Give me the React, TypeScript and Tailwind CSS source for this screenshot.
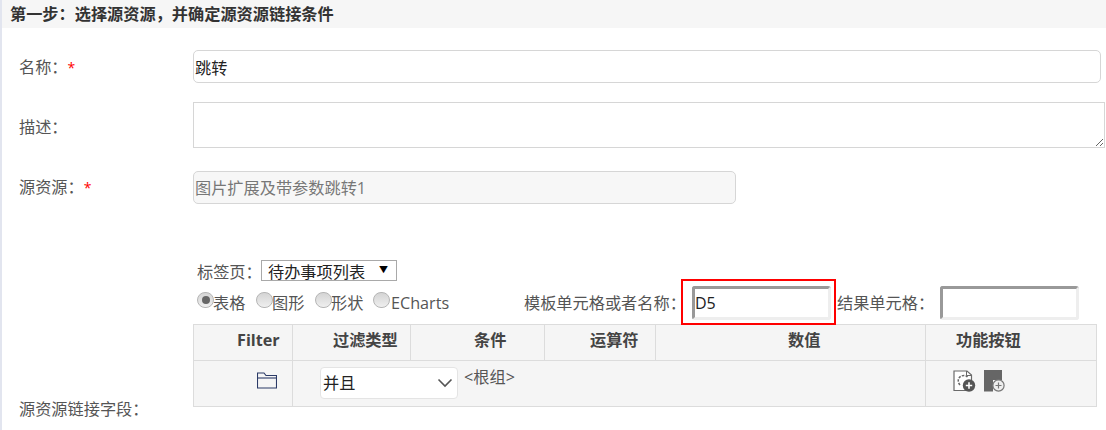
const font = "font-['Open_Sans','Noto_Sans_CJK_SC',sans-serif]";

const headers = [
  { label: "Filter", className: "w-[99px] pl-[43px]" },
  { label: "过滤类型", className: "w-[118px] pl-[40px]" },
  { label: "条件", className: "w-[134px] pl-[63px]" },
  { label: "运算符", className: "w-[111px] pl-[45px]" },
  { label: "数值", className: "w-[270px] pl-[132px]" },
  { label: "功能按钮", className: "w-[170px] pl-[30px]" },
];

function FolderIcon() {
  return (
    <svg width="20" height="17" viewBox="0 0 20 17" fill="none" stroke="#2b3a67" strokeWidth="1.1">
      <path d="M0.5 16V1H7L9 3.5H19.5V16Z" />
      <path d="M0.5 6H19.5" />
    </svg>
  );
}

function AddLinkIcon() {
  return (
    <svg width="23" height="22" viewBox="0 0 23 22" fill="none">
      <path d="M1 1H14L18.5 5V20.5H1Z" fill="#fff" stroke="#6a6a6a" strokeWidth="1.2" />
      <path d="M13.5 1V5.5H18.5" stroke="#6a6a6a" />
      <path d="M7 15C3.5 11 5.5 5.5 11 5.5C12.5 5.5 13.5 6 14.5 7" stroke="#666" strokeWidth="1.5" strokeDasharray="2.4 1.3" />
      <circle cx="16" cy="15.5" r="6.2" fill="#555" />
      <path d="M12.8 15.5H19.2M16 12.3V18.7" stroke="#fff" strokeWidth="1.6" />
    </svg>
  );
}

function AddSheetIcon() {
  return (
    <svg width="22" height="22" viewBox="0 0 22 22" fill="none">
      <path d="M0 0H18V10H9V21.5H0Z" fill="#666" />
      <circle cx="14.5" cy="15.5" r="5.6" fill="#eee" stroke="#777" strokeWidth="1.2" />
      <path d="M11.5 15.5H17.5M14.5 12.5V18.5" stroke="#777" strokeWidth="1.2" />
    </svg>
  );
}

function Radio({ label, checked, className, textClass }: { label: string; checked?: boolean; className?: string; textClass?: string }) {
  return (
    <label className={`flex items-start ${className ?? ""}`}>
      <span className="flex h-[16px] w-[17px] items-center justify-center rounded-full border border-[#b5b5b5] bg-gradient-to-b from-[#d4d4d4] to-[#efefef]">
        {checked && <span className="h-[8px] w-[8px] rounded-full bg-[#666]" />}
      </span>
      <span className={`mt-[1px] leading-[20px] text-[#555] ${textClass ?? "ml-[-1px]"}`}>{label}</span>
    </label>
  );
}

function SunkenInput({ value, className }: { value: string; className: string }) {
  return (
    <input
      readOnly
      value={value}
      className={`h-[34px] rounded-[3px] border-[3px] border-t-[#999] border-l-[#999] border-r-[#eee] border-b-[#eee] bg-white pl-0 text-[16px] text-[#222] outline-none ${className}`}
    />
  );
}

export default function App() {
  return (
    <div className={`h-[430px] w-[1106px] overflow-hidden border-l-2 border-[#e2e5ef] bg-white text-[16.2px] text-[#555] ${font}`}>
      {/* Title */}
      <div className="flex h-[28px] items-center bg-[#f6f6f6] pl-[8px] font-bold leading-none text-[#333]">
        第一步：选择源资源，并确定源资源链接条件
      </div>

      {/* 名称 */}
      <div className="mt-[22px] flex h-[33px]">
        <div className="w-[191px] pl-[17px] leading-[34px]">
          名称：<span className="text-[14px] text-[#f00]">*</span>
        </div>
        <input
          readOnly
          value="跳转"
          className="h-[33px] w-[908px] rounded-[5px] border border-[#d6d6d6] px-[1px] text-[16.2px] text-[#222] outline-none"
        />
      </div>

      {/* 描述 */}
      <div className="mt-[19px] flex h-[46px]">
        <div className="w-[191px] pl-[17px] leading-[51px]">描述：</div>
        <textarea readOnly className="h-[46px] w-[912px] border border-[#d6d6d6] outline-none" />
      </div>

      {/* 源资源 */}
      <div className="mt-[23px] flex h-[33px]">
        <div className="w-[191px] pl-[17px] leading-[32px]">
          源资源：<span className="text-[14px] text-[#f00]">*</span>
        </div>
        <div className="h-[33px] w-[543px] rounded-[5px] border border-[#d6d6d6] bg-[#f7f7f7] pl-[1px] leading-[33px] text-[#777]">
          图片扩展及带参数跳转1
        </div>
      </div>

      {/* 源资源链接字段 */}
      <div className="flex h-[226px]">
        <div className="flex w-[191px] items-end pb-[11px] pl-[17px]">
          <span className="leading-[20px]">源资源链接字段：</span>
        </div>
        <div className="relative w-[904px] pt-[56px]">
          <div className="flex h-[21px] items-center pl-[4px]">
            <span className="w-[64px] whitespace-nowrap pt-[3px]">标签页：</span>
            <div className="flex h-[21px] w-[136px] justify-between border border-[#a9a9a9] pl-[6px] pr-[8px] pt-[2px] leading-[18px] text-[#222]">
              <span>待办事项列表</span>
              <span className="text-[9px] leading-[14px] text-black">▼</span>
            </div>
          </div>

          <div className="mt-[5px] flex h-[38px] pl-[4px] pt-[6px]">
            <Radio label="表格" checked className="w-[59px]" />
            <Radio label="图形" className="w-[59px]" />
            <Radio label="形状" className="w-[58px]" />
            <Radio label="ECharts" className="w-[151px]" textClass="ml-[1px]" />
            <span className="mt-[1px] w-[168px] whitespace-nowrap leading-[20px]">模板单元格或者名称：</span>
            <SunkenInput value="D5" className="-mt-[6px] w-[139px]" />
            <span className="ml-[6px] mt-[1px] w-[103px] whitespace-nowrap leading-[20px]">结果单元格：</span>
            <SunkenInput value="" className="-mt-[6px] w-[139px]" />
          </div>

          {/* highlight */}
          <div className="absolute left-[488px] top-[75px] h-[46px] w-[155px] border-2 border-[#f00]" />

          {/* Filter table */}
          <div className="w-[904px] border border-[#dcdcdc] bg-[#f5f5f5]">
            <div className="flex h-[36px] border-b border-[#dcdcdc]">
              {headers.map((h, i) => (
                <div
                  key={h.label}
                  className={`shrink-0 font-bold leading-[31px] text-[#444] ${i < 5 ? "border-r border-[#dcdcdc]" : ""} ${h.className}`}
                >
                  {h.label}
                </div>
              ))}
            </div>
            <div className="flex h-[45px]">
              <div className="w-[99px] shrink-0 border-r border-[#dcdcdc] pl-[63px] pt-[11px]">
                <FolderIcon />
              </div>
              <div className="flex w-[633px] shrink-0 border-r border-[#dcdcdc] pl-[27px] pt-[6px]">
                <div className="flex h-[32px] w-[138px] items-center justify-between rounded-[4px] border border-[#e4e4e4] bg-white pl-[2px] pr-[4px] text-[#222]">
                  <span>并且</span>
                  <svg width="16" height="10" viewBox="0 0 16 10" fill="none" stroke="#555" strokeWidth="1.6">
                    <path d="M1.5 1.5L8 8L14.5 1.5" />
                  </svg>
                </div>
                <span className="ml-[6px] leading-[20px] text-[#555]">&lt;根组&gt;</span>
              </div>
              <div className="flex gap-[8px] pl-[27px] pt-[9px]">
                <AddLinkIcon />
                <AddSheetIcon />
              </div>
            </div>
          </div>
        </div>
      </div>
    </div>
  );
}
